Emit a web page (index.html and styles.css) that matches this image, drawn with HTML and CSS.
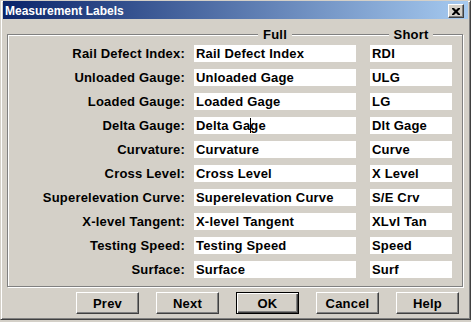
FILE: index.html
```html
<!DOCTYPE html>
<html lang="en">
<head>
    <meta charset="UTF-8">
    <title>Measurement Labels</title>
    <link rel="stylesheet" href="styles.css">
</head>
<body>
    <div class="window">
        <div class="titlebar">
            <span class="title">Measurement Labels</span>
            <button class="close">
                <svg width="8" height="7" viewBox="0 0 8 7">
                    <path d="M0 0h2l2 2 2-2h2v1l-2.5 2.5L8 6v1H6L4 5 2 7H0V6l2.5-2.5L0 1z" fill="#000"/>
                </svg>
            </button>
        </div>
        <div class="group">
            <div class="group-head">
                <span></span>
                <div class="head-full"><span class="head">Full</span></div>
                <div class="head-short"><span class="head">Short</span></div>
            </div>
            <div class="rows">
                <div class="name">Rail Defect Index:</div>
                <div class="field full">Rail Defect Index</div>
                <div class="field short">RDI</div>

                <div class="name">Unloaded Gauge:</div>
                <div class="field full">Unloaded Gage</div>
                <div class="field short">ULG</div>

                <div class="name">Loaded Gauge:</div>
                <div class="field full">Loaded Gage</div>
                <div class="field short">LG</div>

                <div class="name">Delta Gauge:</div>
                <div class="field full">Delta Ga<span class="caret"></span>ge</div>
                <div class="field short">Dlt Gage</div>

                <div class="name">Curvature:</div>
                <div class="field full">Curvature</div>
                <div class="field short">Curve</div>

                <div class="name">Cross Level:</div>
                <div class="field full">Cross Level</div>
                <div class="field short">X Level</div>

                <div class="name">Superelevation Curve:</div>
                <div class="field full">Superelevation Curve</div>
                <div class="field short">S/E Crv</div>

                <div class="name">X-level Tangent:</div>
                <div class="field full">X-level Tangent</div>
                <div class="field short">XLvl Tan</div>

                <div class="name">Testing Speed:</div>
                <div class="field full">Testing Speed</div>
                <div class="field short">Speed</div>

                <div class="name">Surface:</div>
                <div class="field full">Surface</div>
                <div class="field short">Surf</div>
            </div>
        </div>
        <div class="buttons">
            <button class="btn">Prev</button>
            <button class="btn">Next</button>
            <button class="btn default">OK</button>
            <button class="btn">Cancel</button>
            <button class="btn">Help</button>
        </div>
    </div>
</body>
</html>
```

FILE: styles.css
```css
body {
    margin: 0;
    background: #d4d0c8;
    font-family: 'Liberation Sans', Arial, sans-serif;
    color: #000;
}
.window {
    box-sizing: border-box;
    width: 471px;
    height: 320px;
    background: #d4d0c8;
    border: 1px solid;
    border-color: #d4d0c8 #404040 #404040 #d4d0c8;
    box-shadow: inset 1px 1px 0 #fff, inset -1px -1px 0 #808080;
    padding: 0 2px 2px 2px;
}
.titlebar {
    height: 18px;
    display: flex;
    align-items: flex-start;
    justify-content: space-between;
    background: linear-gradient(90deg, #0a246a 0%, #a6caf0 100%);
}
.title {
    color: #fff;
    font-size: 12px;
    font-weight: bold;
    line-height: 14px;
    padding: 3px 0 0 2px;
}
.close {
    box-sizing: border-box;
    width: 16px;
    height: 14px;
    margin: 3px 4px 0 0;
    padding: 0;
    background: #d4d0c8;
    border: 1px solid;
    border-color: #fff #404040 #404040 #fff;
    box-shadow: inset -1px -1px 0 #808080;
    display: flex;
    align-items: center;
    justify-content: center;
}
.group {
    box-sizing: border-box;
    width: 456px;
    margin: 15px 0 0 4px;
    border: 1px solid #808080;
    box-shadow: inset 1px 1px 0 #fff, 1px 1px 0 #fff;
    padding: 0 10px 8px 0;
}
.group-head, .rows {
    display: grid;
    grid-template-columns: 1fr 176px 82px;
    letter-spacing: 0.2px;
}
.group-head {
    margin-top: -8px;
    font-size: 13px;
    font-weight: bold;
    line-height: 15px;
}
.head-full {
    width: 162px;
    text-align: center;
}
.head-short {
    text-align: center;
}
.head {
    background: #d4d0c8;
    padding: 0 5px;
}
.rows {
    margin-top: 3px;
    row-gap: 7px;
    font-size: 13px;
    font-weight: bold;
    line-height: 17px;
}
.name {
    text-align: right;
    padding-right: 9px;
    white-space: nowrap;
}
.field {
    background: #fff;
    padding-left: 2px;
    white-space: nowrap;
}
.field.full {
    width: 162px;
    box-sizing: border-box;
}
.caret {
    display: inline-block;
    width: 1px;
    height: 15px;
    margin-right: -1px;
    background: #000;
    vertical-align: -3px;
}
.buttons {
    display: flex;
    gap: 17px;
    margin-top: 5px;
    padding-left: 73px;
}
.btn {
    box-sizing: border-box;
    width: 63px;
    height: 22px;
    padding: 0;
    background: #d4d0c8;
    border: 1px solid;
    border-color: #fff #404040 #404040 #fff;
    box-shadow: inset -1px -1px 0 #808080;
    font-family: 'Liberation Sans', Arial, sans-serif;
    font-size: 13px;
    font-weight: bold;
    letter-spacing: 0.2px;
    color: #000;
}
.btn.default {
    border: 1px solid #000;
    box-shadow: inset 1px 1px 0 #fff, inset -1px -1px 0 #404040, inset -2px -2px 0 #808080;
}
```
